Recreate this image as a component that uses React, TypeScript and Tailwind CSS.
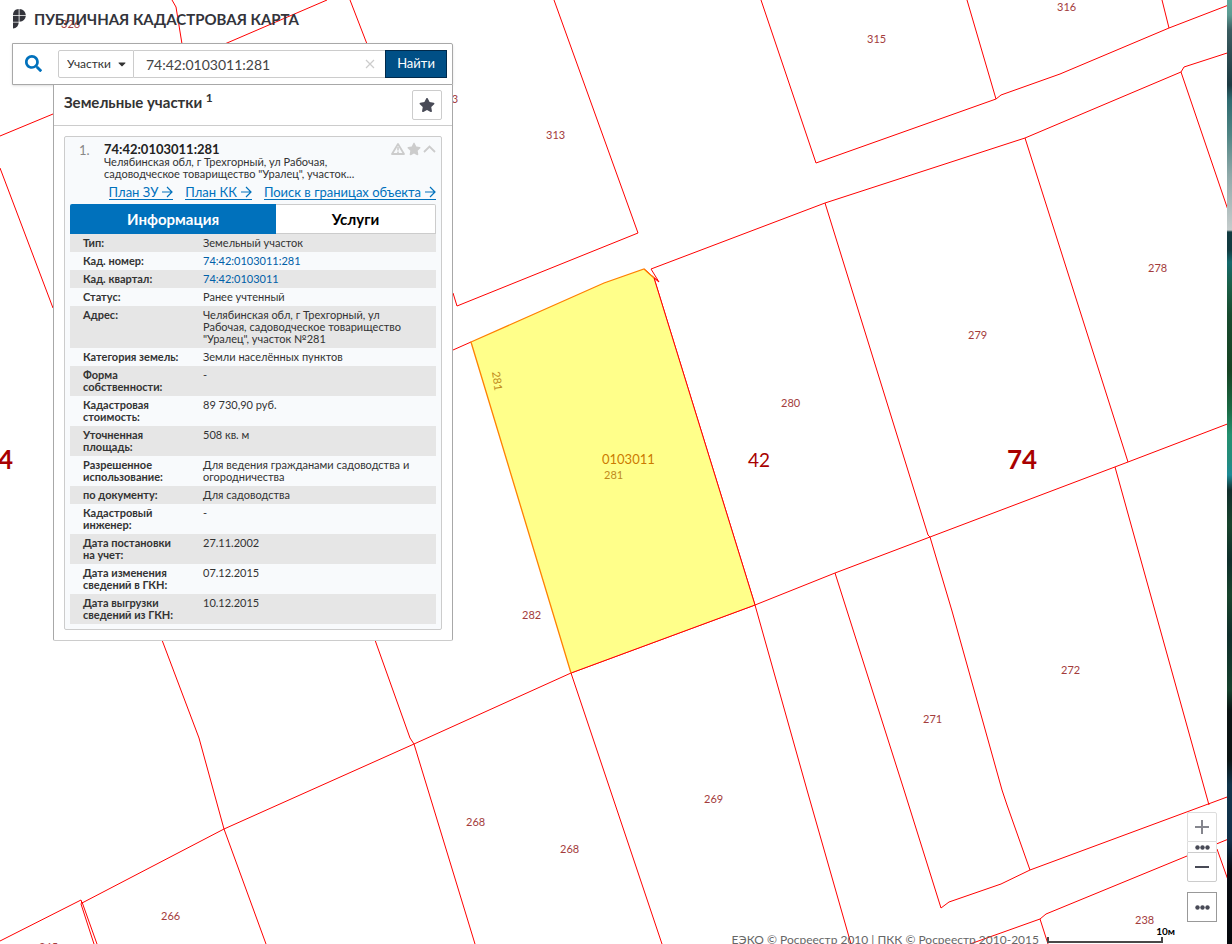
import { useState } from 'react'
import { FaSearch, FaStar, FaCaretDown } from 'react-icons/fa'

const BORDERS = [
  '172,0 176,7 182,44',
  '327,0 227,43 53,114 0,136',
  '350,0 367,44',
  '0,168 53,308',
  '554,0 638,233 457,306 453,293',
  '453,350 471,342',
  '761,0 816,163 996,99 1001,95 1060,74 1169,28 1400,-61',
  '967,0 996,99',
  '1162,0 1169,28',
  '644,269 659,282 651,269 825,203 1025,138 1181,72 1184,67 1400,-3',
  '825,203 928,535 930,537',
  '1025,138 1128,462',
  '1181,72 1400,715',
  '654,278 755,605',
  '1400,358 1128,462 930,537 835,573 755,605 571,673 414,744 224,829 82,903 81,900 0,941',
  '571,673 662,944',
  '755,605 807,790 851,944',
  '835,573 904,790 941,908 949,902 1001,884 1030,870 1400,733',
  '930,537 952,611 1002,790 1007,805 1030,870',
  '1115,467 1209,805',
  '970,944 1040,919 1046,914 1187,856 1400,769',
  '1040,919 1048,944',
  '1217,849 1228,880 1250,944',
  '162,640 199,738 224,829 266,944',
  '375,640 410,738 414,744 475,944',
  '82,902 81,904 94,944',
  '82,902 97,944',
]

const PARCELS = [
  { x: 61, y: 28, label: '326' },
  { x: 867, y: 43, label: '315' },
  { x: 1057, y: 11, label: '316' },
  { x: 546, y: 139, label: '313' },
  { x: 439, y: 103, label: '313' },
  { x: 1148, y: 272, label: '278' },
  { x: 968, y: 339, label: '279' },
  { x: 781, y: 407, label: '280' },
  { x: 522, y: 619, label: '282' },
  { x: 1061, y: 674, label: '272' },
  { x: 923, y: 723, label: '271' },
  { x: 704, y: 803, label: '269' },
  { x: 466, y: 826, label: '268' },
  { x: 560, y: 853, label: '268' },
  { x: 161, y: 920, label: '266' },
  { x: 39, y: 951, label: '265' },
  { x: 1135, y: 924, label: '238' },
]

const ROWS = [
  { name: 'Тип:', value: 'Земельный участок' },
  { name: 'Кад. номер:', value: '74:42:0103011:281', link: true },
  { name: 'Кад. квартал:', value: '74:42:0103011', link: true },
  { name: 'Статус:', value: 'Ранее учтенный' },
  {
    name: 'Адрес:',
    value: 'Челябинская обл, г Трехгорный, ул Рабочая, садоводческое товарищество "Уралец", участок №281',
  },
  { name: 'Категория земель:', value: 'Земли населённых пунктов' },
  { name: 'Форма собственности:', value: '-' },
  { name: 'Кадастровая стоимость:', value: '89 730,90 руб.' },
  { name: 'Уточненная площадь:', value: '508 кв. м' },
  { name: 'Разрешенное использование:', value: 'Для ведения гражданами садоводства и огородничества' },
  { name: 'по документу:', value: 'Для садоводства' },
  { name: 'Кадастровый инженер:', value: '-' },
  { name: 'Дата постановки на учет:', value: '27.11.2002' },
  { name: 'Дата изменения сведений в ГКН:', value: '07.12.2015' },
  { name: 'Дата выгрузки сведений из ГКН:', value: '10.12.2015' },
]

const ACTIONS = ['План ЗУ', 'План КК', 'Поиск в границах объекта']

function CadastralMap() {
  return (
    <svg className="absolute inset-0 size-full" aria-label="Карта участков">
      <g fill="none" stroke="#ff0000" strokeWidth="1">
        {BORDERS.map((points) => (
          <polyline key={points} points={points} />
        ))}
      </g>
      <polygon points="471,342 604,283 644,269 654,278 755,605 571,673" fill="#ffff8a" />
      <polyline points="644,269 659,282" stroke="#ff0000" />
      <polyline points="654,278 755,605 571,673" fill="none" stroke="#ff0000" />
      <polyline points="571,673 471,342 604,283 644,269 654,278" fill="none" stroke="#ff8000" strokeWidth="1.3" />
      <g className="text-[11px]" fill="#a33c3c">
        {PARCELS.map((p) => (
          <text key={`${p.x}-${p.y}`} x={p.x} y={p.y}>
            {p.label}
          </text>
        ))}
      </g>
      <g fill="#c08a1c">
        <text x="604" y="479" className="text-[11px]">281</text>
        <text transform="translate(492 372) rotate(82)" className="text-[11px]">281</text>
        <text x="602" y="464" className="text-[13px]" fill="#cc7a00">0103011</text>
      </g>
      <g fill="#a80000">
        <text x="748" y="467" className="text-[19px]">42</text>
        <text x="1007" y="469" className="text-[26px] font-bold">74</text>
        <text x="-17" y="469" className="text-[26px] font-bold">74</text>
      </g>
    </svg>
  )
}

function Logo() {
  return (
    <svg viewBox="0 0 14 20" className="h-5 w-3.5 text-[#33343b]" fill="currentColor" aria-hidden="true">
      <path d="M6.700 0v6.200H1C1 2.500 3 .3 6.700 0z" />
      <path d="M7.500 0c3.700.3 5.900 2.600 6.300 6.200H7.500z" />
      <path d="M1 7h5.700v5.800H1z" />
      <path d="M7.500 7h6.300c-.4 3.400-2.600 5.500-6.300 5.800z" />
      <path d="M1 13.600h5.700c-.2 3.400-2.300 5.700-5.700 6z" />
    </svg>
  )
}

function Arrow() {
  return (
    <svg viewBox="0 0 12 12" className="ml-[3px] inline-block size-3 align-[-1px]" fill="none" stroke="currentColor" aria-hidden="true">
      <path d="M1 6h10M6 1l5 5-5 5" strokeWidth="1.2" />
    </svg>
  )
}

function WarningIcon() {
  return (
    <svg viewBox="0 0 14 12" className="h-3 w-3.5" fill="none" stroke="currentColor" aria-hidden="true">
      <path d="M7 1l6 10H1z" strokeWidth="1.8" strokeLinejoin="round" />
      <path d="M7 4v3.500M7 8.500v1.500" strokeWidth="1.6" />
    </svg>
  )
}

function Dots() {
  return (
    <svg viewBox="0 0 15 5" className="h-[5px] w-[15px]" fill="#484a56" aria-hidden="true">
      <circle cx="2.5" cy="2.5" r="2.2" />
      <circle cx="7.5" cy="2.5" r="2.2" />
      <circle cx="12.5" cy="2.5" r="2.2" />
    </svg>
  )
}

function SearchForm() {
  const [query, setQuery] = useState('74:42:0103011:281')

  return (
    <form
      onSubmit={(e) => e.preventDefault()}
      className="flex h-[42px] items-center rounded-tr-xs border border-[#a8a8a8] bg-white pr-[5px] shadow-sm"
    >
      <span className="grid w-[45px] place-items-center pb-0.5 pr-1 text-[#0071bc]">
        <FaSearch className="size-[17px]" />
      </span>
      <div className="relative">
        <select
          aria-label="Тип объекта"
          className="h-7 w-[76px] appearance-none rounded-l-xs border border-[#ccc] bg-white pl-2 text-[12px] text-[#333]"
        >
          <option>Участки</option>
        </select>
        <FaCaretDown className="pointer-events-none absolute right-1.5 top-2 size-3 text-[#333]" />
      </div>
      <div className="flex h-7 flex-1 items-center border-y border-[#ccc] pl-3 pr-2.5">
        <input
          aria-label="Поиск"
          value={query}
          onChange={(e) => setQuery(e.target.value)}
          className="w-full min-w-0 text-[14px] text-[#444] outline-none"
        />
        <button type="button" aria-label="Очистить" onClick={() => setQuery('')} className="text-[#ccc]">
          <svg viewBox="0 0 10 10" className="size-2.5" stroke="currentColor" aria-hidden="true">
            <path d="M1 1l8 8M9 1l-8 8" strokeWidth="1.2" />
          </svg>
        </button>
      </div>
      <button type="submit" className="h-7 w-[62px] border border-[#00294a] bg-[#004f86] text-[13px] text-white">
        Найти
      </button>
    </form>
  )
}

function ParcelCard() {
  return (
    <article className="rounded-xs border border-[#ccc] bg-[#f8fafc] p-[5px]">
      <div className="flex leading-3">
        <span className="w-[34px] pl-[9px] pt-0.5 text-[13px] text-[#888]">1.</span>
        <div className="min-w-0 flex-1">
          <h3 className="text-[13px] font-bold leading-[14px] text-[#222]">74:42:0103011:281</h3>
          <p className="w-[270px] text-[11px] leading-3">
            Челябинская обл, г Трехгорный, ул Рабочая, садоводческое товарищество "Уралец", участок...
          </p>
        </div>
        <div className="flex h-3.5 items-center gap-0.5 text-[#ccc]">
          <button type="button" aria-label="Сообщить об ошибке"><WarningIcon /></button>
          <button type="button" aria-label="В избранное"><FaStar className="size-3.5" /></button>
          <button type="button" aria-label="Свернуть">
            <svg viewBox="0 0 13 8" className="h-2 w-[13px]" fill="none" stroke="currentColor" aria-hidden="true">
              <path d="M1 7l5.500-5.500L12 7" strokeWidth="1.8" />
            </svg>
          </button>
        </div>
      </div>
      <nav className="flex h-6 items-center justify-end gap-3 text-[13px] leading-[14px] text-[#0071bc]">
        {ACTIONS.map((a) => (
          <a key={a} href="#" className="whitespace-nowrap border-b border-[#0071bc]">
            {a}
            <Arrow />
          </a>
        ))}
      </nav>
      <div role="tablist" className="flex h-[30px] text-[15px] font-bold">
        <button type="button" role="tab" aria-selected="true" className="w-[206px] rounded-tl-xs bg-[#0071bc] text-white">
          Информация
        </button>
        <button
          type="button"
          role="tab"
          aria-selected="false"
          className="flex-1 rounded-tr-xs border border-l-0 border-[#ccc] bg-white text-black"
        >
          Услуги
        </button>
      </div>
      <table className="w-full table-fixed text-left text-[11px] leading-3 text-[#333]">
        <tbody>
          {ROWS.map((r) => (
            <tr key={r.name} className="align-top odd:bg-[#e6e6e6]">
              <th scope="row" className="w-[133px] py-[3px] pl-[13px] pr-5 font-bold">
                {r.name}
              </th>
              <td className="py-[3px] pr-5">
                {r.link ? <a href="#" className="text-[#0060a8]">{r.value}</a> : r.value}
              </td>
            </tr>
          ))}
        </tbody>
      </table>
    </article>
  )
}

function MapControls() {
  return (
    <div className="absolute bottom-[22px] right-[10px] flex w-[30px] flex-col">
      <button type="button" aria-label="Приблизить" className="grid h-[30px] place-items-center rounded-t-xs border border-[#ddd] bg-white/80">
        <svg viewBox="0 0 14 14" className="size-3.5" stroke="#85868e" strokeWidth="2" aria-hidden="true">
          <path d="M7 0v14M0 7h14" />
        </svg>
      </button>
      <button type="button" aria-label="Масштаб" className="grid h-[10px] place-items-center border-x border-[#ddd] bg-white">
        <Dots />
      </button>
      <button type="button" aria-label="Отдалить" className="grid h-[30px] place-items-center rounded-b-xs border border-[#ccc] bg-white">
        <svg viewBox="0 0 14 2" className="h-0.5 w-3.5" fill="#484a56" aria-hidden="true">
          <path d="M0 0h14v2H0z" />
        </svg>
      </button>
      <button type="button" aria-label="Ещё" className="mt-2.5 grid h-[30px] place-items-center border border-[#999] bg-white">
        <Dots />
      </button>
    </div>
  )
}

export default function App() {
  return (
    <div className="flex h-screen overflow-hidden bg-white font-['Lato','Noto_Sans',sans-serif] text-[#333]">
      <main className="relative min-w-0 flex-1 overflow-hidden">
        <CadastralMap />
        <div className="relative w-[453px] pl-3">
          <header className="flex h-[43px] items-start gap-2 pt-[9px]">
            <Logo />
            <h1 className="whitespace-nowrap text-[15px] font-bold leading-5 text-[#33343b]">ПУБЛИЧНАЯ КАДАСТРОВАЯ КАРТА</h1>
          </header>
          <SearchForm />
          <section className="ml-[41px] rounded-b-xs border border-t-0 border-[#a8a8a8] border-b-[#ccc] bg-white">
            <div className="flex h-[41px] items-center justify-between border-b border-[#ccc] px-2.5">
              <h2 className="pb-1.5 text-[15px] font-bold leading-5">
                Земельные участки <sup className="text-[12px]">1</sup>
              </h2>
              <button type="button" aria-label="Избранное" className="grid size-[30px] place-items-center rounded-xs border border-[#ccc] text-[#484a56]">
                <FaStar className="size-4" />
              </button>
            </div>
            <div className="p-2.5">
              <ParcelCard />
            </div>
          </section>
        </div>
        <MapControls />
        <footer className="absolute bottom-0 right-[64px] flex h-[18px] items-start">
          <p className="whitespace-nowrap pr-2 pt-1.5 text-[12px] leading-4 text-[#666]">ЕЭКО © Росреестр 2010 | ПКК © Росреестр 2010-2015</p>
          <div className="relative mt-[11px] h-1.5 w-[116px] border-2 border-t-0 border-[#484848]">
            <span className="absolute -right-3.5 bottom-1 text-[10px] font-bold leading-3 text-black">10м</span>
          </div>
        </footer>
      </main>
      <aside
        aria-hidden="true"
        className="w-[5px] shrink-0 bg-[linear-gradient(to_bottom,#5fa79b_0px,#5b9a91_15px,#3a5c60_30px,#1c3a42_85px,#2f6b70_100px,#4f8584_135px,#8fa9a9_175px,#c5cccc_230px,#123b40_232px,#123b40_250px,#15686b_262px,#1a6048_285px,#174a2e_315px,#164323_370px,#1a6b45_410px,#239070_435px,#238c7c_460px,#1d8a96_475px,#102e2c_490px,#17442c_525px,#0f2e2b_560px,#17442c_595px,#0f2e2b_635px,#15402c_690px,#0a1414_710px,#0a1414_760px,#10344a_785px,#10304a_840px,#070c12_870px,#05080c_100%)]"
      />
    </div>
  )
}
